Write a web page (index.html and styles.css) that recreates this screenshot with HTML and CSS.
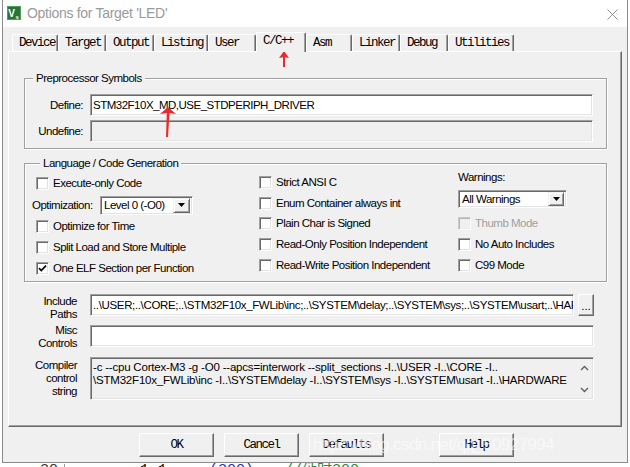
FILE: index.html
```html
<!DOCTYPE html>
<html>
<head>
<meta charset="utf-8">
<title>Options for Target 'LED'</title>
<link rel="stylesheet" href="styles.css">
</head>
<body>
<div class="window">
  <div class="titlebar">
    <svg class="app-icon" width="14" height="14" viewBox="0 0 14 14">
      <rect x="0" y="0" width="14" height="14" fill="#27743a"/>
      <rect x="0.5" y="0.5" width="13" height="13" fill="none" stroke="#4f9d5d"/>
      <text x="1.3" y="10.5" font-family="Liberation Sans" font-weight="bold" font-size="10" fill="#fff">V</text>
      <text x="8.6" y="12.6" font-family="Liberation Sans" font-weight="bold" font-size="6" fill="#fff">s</text>
    </svg>
    <span class="title">Options for Target 'LED'</span>
    <svg class="close" width="11" height="11" viewBox="0 0 11 11">
      <path d="M0.5 0.5L10.5 10.5M10.5 0.5L0.5 10.5" stroke="#8f8f8f" stroke-width="1" fill="none"/>
    </svg>
  </div>
  <div class="client">
    <div class="tabs">
      <div class="tab">Device</div>
      <div class="tab">Target</div>
      <div class="tab">Output</div>
      <div class="tab">Listing</div>
      <div class="tab">User</div>
      <div class="tab active">C/C++</div>
      <div class="tab">Asm</div>
      <div class="tab">Linker</div>
      <div class="tab">Debug</div>
      <div class="tab">Utilities</div>
    </div>
    <div class="panel">
      <fieldset class="group group-pre">
        <legend>Preprocessor Symbols</legend>
        <div class="sym-grid">
          <span class="lbl">Define:</span>
          <div class="field">STM32F10X_MD,USE_STDPERIPH_DRIVER</div>
          <span class="lbl">Undefine:</span>
          <div class="field field-off"></div>
        </div>
      </fieldset>
      <fieldset class="group group-lang">
        <legend>Language / Code Generation</legend>
        <div class="lang-grid">
          <div class="col col-left">
            <div class="check"><span class="box"></span><span>Execute-only Code</span></div>
            <div class="opt-row">
              <span class="opt-lbl">Optimization:</span>
              <div class="select select-opt"><span class="sel-text">Level 0 (-O0)</span><span class="drop"><svg width="7" height="4" viewBox="0 0 7 4"><polygon points="0,0 7,0 3.5,4" fill="#000"/></svg></span></div>
            </div>
            <div class="check"><span class="box"></span><span>Optimize for Time</span></div>
            <div class="check"><span class="box"></span><span>Split Load and Store Multiple</span></div>
            <div class="check"><span class="box"><svg width="11" height="11" viewBox="0 0 11 11"><path d="M2 5.2L4.3 7.6L9 2.6" stroke="#000" stroke-width="1.7" fill="none"/></svg></span><span>One ELF Section per Function</span></div>
          </div>
          <div class="col col-mid">
            <div class="check"><span class="box"></span><span>Strict ANSI C</span></div>
            <div class="check"><span class="box"></span><span>Enum Container always int</span></div>
            <div class="check"><span class="box"></span><span>Plain Char is Signed</span></div>
            <div class="check"><span class="box"></span><span>Read-Only Position Independent</span></div>
            <div class="check"><span class="box"></span><span>Read-Write Position Independent</span></div>
          </div>
          <div class="col col-right">
            <span class="warn-lbl">Warnings:</span>
            <div class="select select-warn"><span class="sel-text">All Warnings</span><span class="drop"><svg width="7" height="4" viewBox="0 0 7 4"><polygon points="0,0 7,0 3.5,4" fill="#000"/></svg></span></div>
            <div class="check check-first disabled"><span class="box"></span><span>Thumb Mode</span></div>
            <div class="check"><span class="box"></span><span>No Auto Includes</span></div>
            <div class="check"><span class="box"></span><span>C99 Mode</span></div>
          </div>
        </div>
      </fieldset>
      <div class="misc-grid">
        <span class="lbl lbl-low">Include<br>Paths</span>
        <div class="inc-row">
          <div class="field field-path">..\USER;..\CORE;..\STM32F10x_FWLib\inc;..\SYSTEM\delay;..\SYSTEM\sys;..\SYSTEM\usart;..\HARDWARE</div>
          <div class="dots">...</div>
        </div>
        <span class="lbl">Misc<br>Controls</span>
        <div class="field"></div>
        <span class="lbl">Compiler<br>control<br>string</span>
        <div class="field field-off field-area">
          <div class="area-text">-c --cpu Cortex-M3 -g -O0 --apcs=interwork --split_sections -I..\USER -I..\CORE -I..<br>\STM32F10x_FWLib\inc -I..\SYSTEM\delay -I..\SYSTEM\sys -I..\SYSTEM\usart -I..\HARDWARE</div>
          <div class="scroll">
            <svg width="17" height="41" viewBox="0 0 17 41">
              <path d="M5 12L8.5 8.5L12 12" stroke="#606060" stroke-width="1.4" fill="none"/>
              <path d="M5 30L8.5 33.5L12 30" stroke="#606060" stroke-width="1.4" fill="none"/>
            </svg>
          </div>
        </div>
      </div>
    </div>
    <div class="buttons">
      <div class="btn">OK</div>
      <div class="btn">Cancel</div>
      <div class="btn">Defaults</div>
      <div class="btn btn-help">Help</div>
    </div>
  </div>
</div>
<div class="peek">
  <span class="pk-num">30</span><span class="pk-bar"></span><span class="pk-a">1 1</span><span class="pk-b">(300)</span><span class="pk-c">//延时300</span>
</div>

<svg class="arrow arrow-tab" width="14" height="17" viewBox="0 0 14 17">
  <polygon points="7,0 12,7 8,6.3 8,16 6,16 6,6.3 2,7" fill="#ea2a2a"/>
</svg>
<svg class="arrow arrow-define" width="18" height="31" viewBox="0 0 18 31">
  <polygon points="8,0 16,7 9.5,6 8,30 6,30 6.8,6 0,7" fill="#ea2a2a"/>
</svg>
<div class="watermark">https://blog.csdn.net/qq_50927994</div>
</body>
</html>
```

FILE: styles.css
```css
* { box-sizing: border-box; }
html, body { margin: 0; padding: 0; }
body {
  width: 630px;
  height: 467px;
  overflow: hidden;
  position: relative;
  background: #fff;
  color: #000;
  font-family: "Liberation Sans", Arial, sans-serif;
  font-size: 11.5px;
  letter-spacing: -0.5px;
  line-height: 13px;
}

.window {
  margin-left: 2px;
  width: 626px;
  height: 463px;
  border: 1px solid #8a8a8a;
  border-top: 0;
  display: flex;
  flex-direction: column;
  background: #f0f0f0;
}

.titlebar {
  height: 27px;
  flex: none;
  background: #fff;
  display: flex;
  align-items: flex-start;
  padding: 6px 0 0 4px;
}
.app-icon { flex: none; display: block; }
.title {
  margin-left: 6px;
  font-size: 14px;
  letter-spacing: -0.3px;
  line-height: 15px;
  color: #9a9a9a;
}
.close { margin: 3px 9px 0 auto; display: block; }

.client {
  flex: 1;
  padding: 5px 5px 0 5px;
  display: flex;
  flex-direction: column;
}

.tabs {
  height: 19px;
  display: grid;
  grid-template-columns: 46px 48px 48px 54px 48px 50px 46px 48px 48px 66px;
  align-items: end;
  padding-left: 4px;
}
.tab {
  height: 17px;
  border-top: 1px solid #fff;
  border-left: 1px solid #fff;
  border-right: 1px solid #696969;
  box-shadow: inset -1px 0 0 #a0a0a0;
  border-radius: 2px 2px 0 0;
  padding-left: 6px;
  font-family: "Liberation Mono", "Courier New", monospace;
  font-size: 12.5px;
  letter-spacing: -1.5px;
  line-height: 16px;
  white-space: nowrap;
  overflow: hidden;
}
.tab.active {
  height: 20px;
  margin-bottom: -1px;
  position: relative;
  z-index: 1;
  background: #f0f0f0;
  line-height: 17px;
}

.panel {
  height: 376px;
  border: 1px solid;
  border-color: #fff #696969 #696969 #fff;
  box-shadow: inset -1px -1px 0 #a0a0a0;
  padding: 19px 14px 26px 15px;
}

.group {
  margin: 0;
  min-width: 0;
  border: 1px solid #a0a0a0;
  box-shadow: inset 1px 1px 0 #fff, 1px 1px 0 #fff;
}
.group legend {
  margin-left: 8px;
  padding: 0 3px;
  line-height: 14px;
  background: #f0f0f0;
}
.group-pre { padding: 9px 13px 6px 0; }
.group-lang { margin-top: 7px; padding: 2px 0 2px 7px; }

.sym-grid {
  display: grid;
  grid-template-columns: 58px minmax(0, 1fr);
  column-gap: 7px;
  row-gap: 4px;
}
.lbl { text-align: right; align-self: center; }

.field {
  height: 22px;
  min-width: 0;
  background: #fff;
  border: 1px solid;
  border-color: #a0a0a0 #fff #fff #a0a0a0;
  box-shadow: inset 1px 1px 0 #696969, inset -1px -1px 0 #e3e3e3;
  padding: 0 2px;
  line-height: 20px;
  white-space: nowrap;
  overflow: hidden;
}
.field-off { background: #f0f0f0; }
.field-path { letter-spacing: -0.35px; }

.lang-grid {
  display: grid;
  grid-template-columns: 227px 199px minmax(0, 1fr);
}
.col-left {
  display: grid;
  grid-template-rows: 22px 22px 21px 21px 21px;
}
.col-mid {
  display: grid;
  grid-template-rows: repeat(5, 20.8px);
}
.col-right {
  display: flex;
  flex-direction: column;
}
.col-left .check { padding-left: 4px; }
.check {
  display: flex;
  align-items: center;
  gap: 4px;
  white-space: nowrap;
}
.col-right .check { height: 21px; }
.col-right .check-first { margin-top: 5px; }
.box {
  flex: none;
  width: 13px;
  height: 13px;
  background: #fff;
  border: 1px solid;
  border-color: #a0a0a0 #fff #fff #a0a0a0;
  box-shadow: inset 1px 1px 0 #696969, inset -1px -1px 0 #e3e3e3;
  display: flex;
  align-items: center;
  justify-content: center;
}
.box svg { display: block; }
.disabled { color: #a0a0a0; }
.disabled .box {
  background: #f0f0f0;
  border-color: #c8c8c8 #fff #fff #c8c8c8;
  box-shadow: inset 1px 1px 0 #b4b4b4, inset -1px -1px 0 #ececec;
}

.opt-row { display: flex; align-items: center; }
.opt-lbl { width: 68px; flex: none; }

.select {
  display: flex;
  align-items: center;
  background: #fff;
  border: 1px solid;
  border-color: #a0a0a0 #fff #fff #a0a0a0;
  box-shadow: inset 1px 1px 0 #696969, inset -1px -1px 0 #e3e3e3;
  padding: 0 2px 0 3px;
  white-space: nowrap;
}
.select-opt { width: 93px; height: 19px; }
.select-warn { width: 109px; height: 18px; margin-top: 7px; }
.sel-text { flex: 1; }
.drop {
  flex: none;
  width: 17px;
  height: 15px;
  background: #f0f0f0;
  border: 1px solid;
  border-color: #f0f0f0 #696969 #696969 #f0f0f0;
  box-shadow: inset 1px 1px 0 #fff, inset -1px -1px 0 #a0a0a0;
  display: flex;
  align-items: center;
  justify-content: center;
}
.select-warn .drop { width: 16px; height: 14px; }
.drop svg { display: block; }
.warn-lbl { height: 11px; line-height: 11px; }

.misc-grid {
  margin-top: 12px;
  display: grid;
  grid-template-columns: 53px minmax(0, 1fr);
  grid-template-rows: 22px 23px 43px;
  column-gap: 13px;
  row-gap: 9px;
  padding-right: 13px;
}
.lbl-low { padding-top: 6px; }
.inc-row { display: flex; gap: 4px; min-width: 0; }
.inc-row .field { flex: 1; }
.dots {
  flex: none;
  width: 16px;
  height: 22px;
  border: 1px solid;
  border-color: #fff #696969 #696969 #fff;
  box-shadow: inset -1px -1px 0 #a0a0a0;
  text-align: center;
  line-height: 22px;
  letter-spacing: 0;
}
.field-area {
  height: 43px;
  display: flex;
  padding: 0 0 0 2px;
}
.area-text {
  flex: 1;
  min-width: 0;
  padding-top: 3px;
  line-height: 13px;
  letter-spacing: -0.2px;
  overflow: hidden;
  white-space: nowrap;
}
.scroll { flex: none; width: 17px; }
.scroll svg { display: block; }

.buttons {
  display: flex;
  gap: 10px;
  margin-top: 6px;
  padding-left: 131px;
}
.btn {
  width: 75px;
  height: 24px;
  border: 1px solid;
  border-color: #fff #696969 #696969 #fff;
  box-shadow: inset -1px -1px 0 #a0a0a0;
  text-align: center;
  font-family: "Liberation Mono", "Courier New", monospace;
  font-size: 12.5px;
  letter-spacing: -1.5px;
  line-height: 22px;
}
.btn-help { margin-left: 45px; }

.peek {
  height: 4px;
  overflow: hidden;
  display: flex;
  padding-left: 40px;
  font-family: "Liberation Mono", "Noto Sans CJK SC", monospace;
  font-size: 15px;
  line-height: 14px;
  letter-spacing: 0;
  white-space: pre;
}
.peek span { display: block; margin-top: 1px; }
.pk-num { color: #333; }
.pk-bar { width: 1px; height: 6px; background: #999; margin-left: 6px; }
.pk-a { color: #111; margin-left: 75px; }
.pk-b { color: #1a35c8; margin-left: 42px; }
.pk-c { color: #2b8a3e; margin-left: 30px; }

.arrow { position: absolute; display: block; }
.arrow-tab { left: 277px; top: 51px; }
.arrow-define { left: 160px; top: 107px; }

.watermark {
  position: absolute;
  left: 313px;
  top: 436px;
  font-size: 17px;
  letter-spacing: -0.6px;
  line-height: 18px;
  color: rgba(255, 255, 255, 0.6);
  white-space: nowrap;
}
```
